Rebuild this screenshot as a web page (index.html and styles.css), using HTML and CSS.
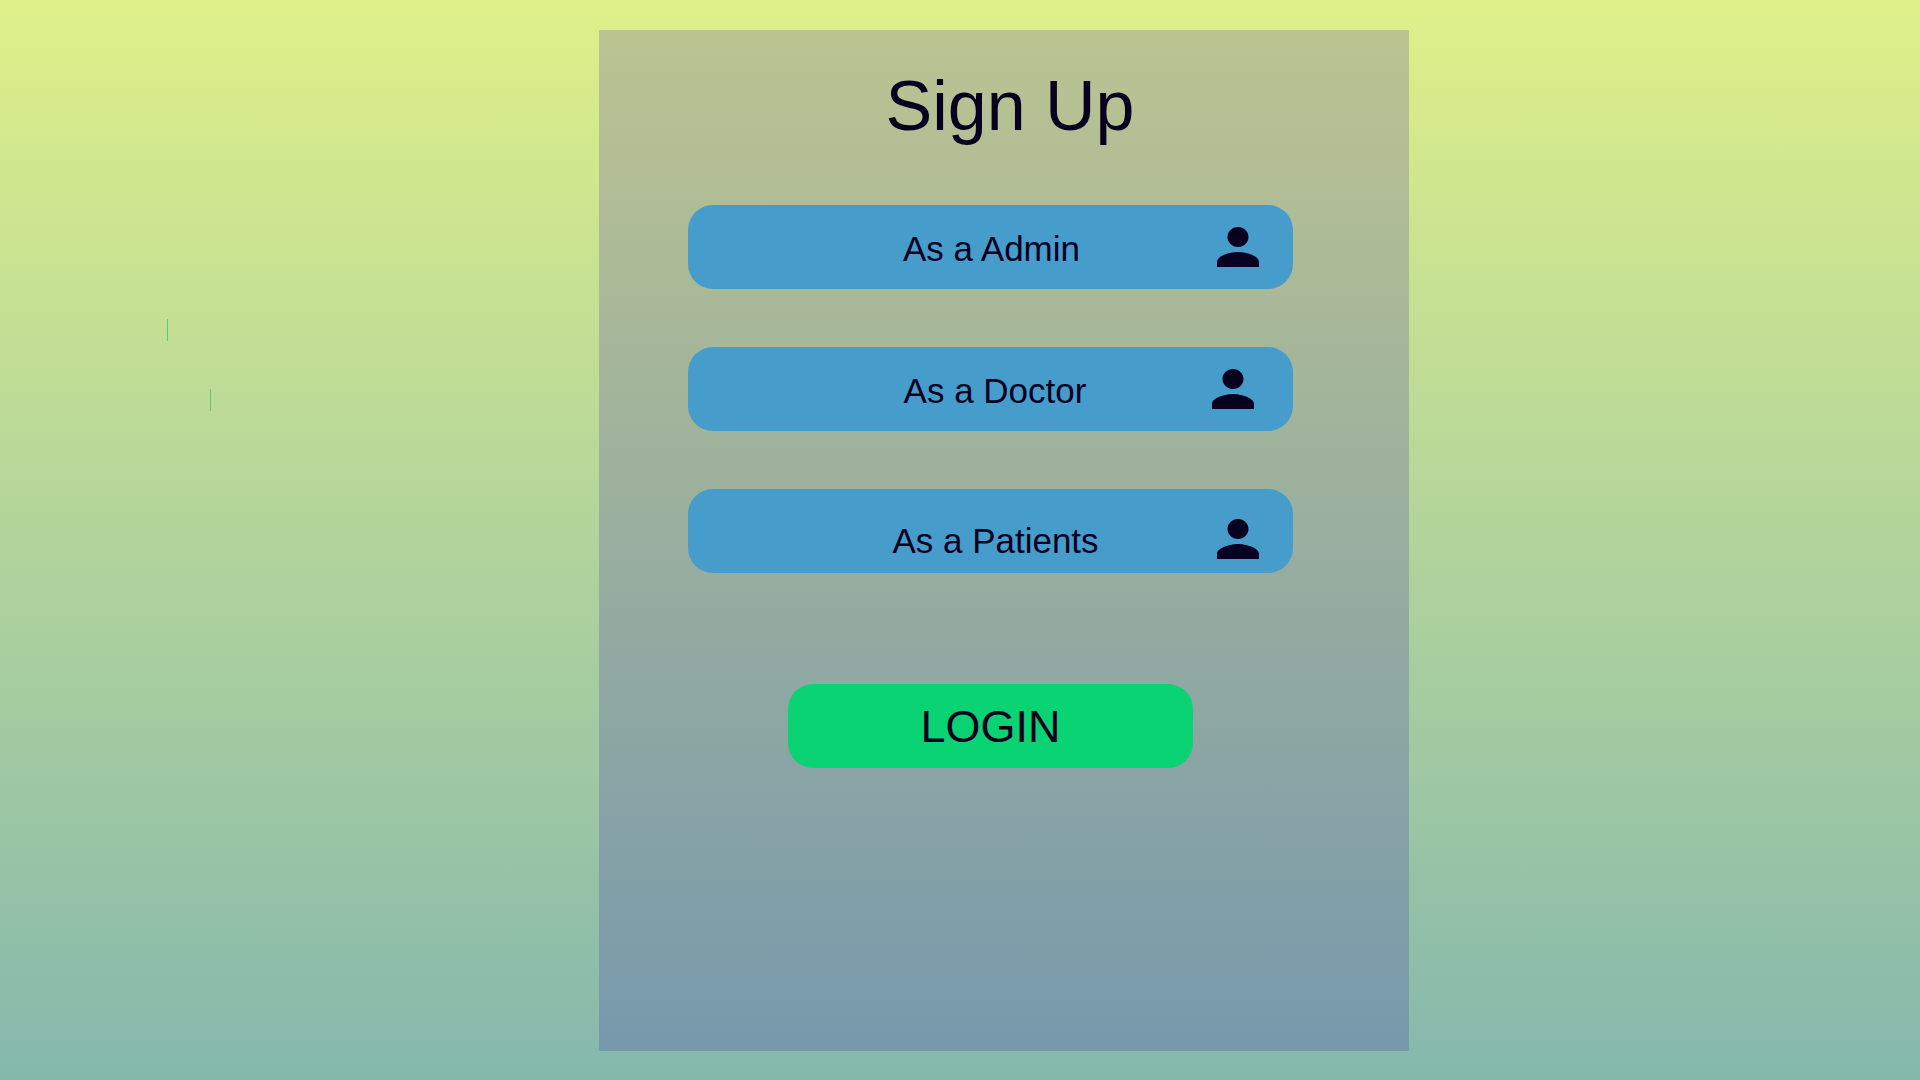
FILE: index.html
```html
<!DOCTYPE html>
<html lang="en">
<head>
  <meta charset="utf-8">
  <meta name="viewport" content="width=device-width, initial-scale=1">
  <title>Sign Up</title>
  <link rel="stylesheet" href="styles.css">
</head>
<body>
  <svg class="sprite" aria-hidden="true">
    <symbol id="person" viewBox="4 4 16 16" preserveAspectRatio="none">
      <path d="M12 12c2.21 0 4-1.79 4-4s-1.79-4-4-4-4 1.79-4 4 1.79 4 4 4zm0 2c-2.67 0-8 1.34-8 4v2h16v-2c0-2.66-5.33-4-8-4z"/>
    </symbol>
  </svg>
  <div class="page">
    <div class="marks" aria-hidden="true">
      <span class="mark"></span>
      <span class="mark mark-inset"></span>
    </div>
    <main class="panel">
      <h1 class="title">Sign Up</h1>
      <div class="roles">
        <button type="button" class="role">
          <span class="role-label">As a Admin</span>
          <svg class="role-icon" aria-hidden="true"><use href="#person"/></svg>
        </button>
        <button type="button" class="role role-doctor">
          <span class="role-label">As a Doctor</span>
          <svg class="role-icon" aria-hidden="true"><use href="#person"/></svg>
        </button>
        <button type="button" class="role role-patients">
          <span class="role-label">As a Patients</span>
          <svg class="role-icon" aria-hidden="true"><use href="#person"/></svg>
        </button>
        <button type="button" class="login">LOGIN</button>
      </div>
    </main>
  </div>
</body>
</html>
```
FILE: styles.css
```css
* {
  box-sizing: border-box;
}

body {
  margin: 0;
  color: #07001f;
  font-family: "Liberation Sans", Arial, sans-serif;
}

.sprite {
  display: none;
}

.page {
  display: grid;
  grid-template-columns: 599fr 810fr 511fr;
  min-height: 100vh;
  padding: 30px 0 29px;
  background: linear-gradient(#dff089, #85b8ad);
}

.marks {
  display: flex;
  flex-direction: column;
  gap: 48px;
  padding: 289px 0 0 167px;
}

.mark {
  width: 1px;
  height: 22px;
  background: #50cf7f;
}

.mark-inset {
  margin-left: 43px;
}

.panel {
  padding: 36px 0 40px;
  background: rgba(55, 23, 175, 0.2);
}

.title {
  margin: 0 0 59px;
  padding-left: 12px;
  font-size: 70px;
  font-weight: 400;
  line-height: 80px;
  text-align: center;
}

.roles {
  display: flex;
  flex-direction: column;
  gap: 58px;
  padding: 0 116px 0 89px;
}

.role,
.login {
  height: 84px;
  border: 0;
  border-radius: 25px;
  color: inherit;
  font-family: inherit;
  cursor: pointer;
}

.role {
  display: flex;
  align-items: center;
  padding: 0 34px 0 78px;
  background: #469ccb;
  font-size: 35px;
  line-height: 40px;
}

.role-doctor {
  padding: 0 39px 0 90px;
}

.role-patients {
  padding: 16px 34px 0 86px;
}

.role-label {
  flex: 1;
  padding-top: 4px;
}

.role-icon {
  width: 42px;
  height: 40px;
  fill: #07001f;
}

.login {
  width: 67%;
  margin: 53px auto 0;
  padding: 2px 0 0;
  background: #09d372;
  font-size: 45px;
}
```
